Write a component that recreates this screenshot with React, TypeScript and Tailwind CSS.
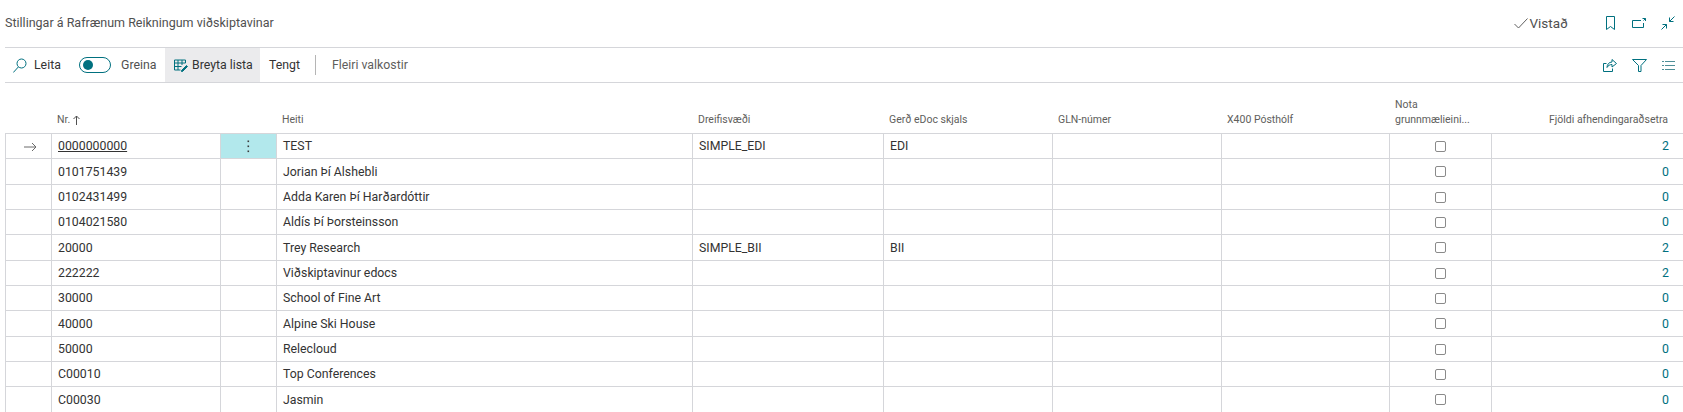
const font = "font-['Roboto','Open_Sans',sans-serif]";

const rows = [
  { nr: '0101751439', name: 'Jorian Þí Alshebli', count: '0' },
  { nr: '0102431499', name: 'Adda Karen Þí Harðardóttir', count: '0' },
  { nr: '0104021580', name: 'Aldís Þí Þorsteinsson', count: '0' },
  { nr: '20000', name: 'Trey Research', area: 'SIMPLE_BII', doc: 'BII', count: '2' },
  { nr: '222222', name: 'Viðskiptavinur edocs', count: '2' },
  { nr: '30000', name: 'School of Fine Art', count: '0' },
  { nr: '40000', name: 'Alpine Ski House', count: '0' },
  { nr: '50000', name: 'Relecloud', count: '0' },
  { nr: 'C00010', name: 'Top Conferences', count: '0' },
  { nr: 'C00030', name: 'Jasmin', count: '0' },
];

const gridCols = 'grid grid-cols-[47px_169px_56px_416px_191px_169px_169px_168px_102px_191px]';
const cell = 'border-r border-[#d5d6da] px-[6px] pt-[1px] flex items-center truncate';
const head = 'px-[5px]';

function CheckBox() {
  return <span className="block w-[11px] h-[11px] rounded-[2px] border border-[#8a8a8a] bg-white" />;
}

function Row({ nr, name, area, doc, count, active }: { nr: string; name: string; area?: string; doc?: string; count: string; active?: boolean }) {
  return (
    <div className={`${gridCols} h-[25.33px] border-b border-[#d5d6da] text-[12.3px] text-[#333333]`}>
      <div className={`${cell} justify-center border-l`}>
        {active && (
          <svg width="13" height="10" viewBox="0 0 13 10" fill="none" stroke="#6b6b6b" className="ml-[3px]">
            <path d="M0 5h12M8 1l4 4-4 4" />
          </svg>
        )}
      </div>
      <div className={cell}>{active ? <span className="underline">{nr}</span> : nr}</div>
      <div className={`${cell} justify-center ${active ? 'bg-[#b2e8ec]' : ''}`}>
        {active && (
          <svg width="3" height="13" viewBox="0 0 3 13" fill="#3a3a3a">
            <rect x="0.5" y="0.5" width="1.6" height="1.6" />
            <rect x="0.5" y="5.5" width="1.6" height="1.6" />
            <rect x="0.5" y="10.5" width="1.6" height="1.6" />
          </svg>
        )}
      </div>
      <div className={cell}>{name}</div>
      <div className={cell}>{area}</div>
      <div className={cell}>{doc}</div>
      <div className={cell} />
      <div className={cell} />
      <div className={`${cell} justify-center`}><CheckBox /></div>
      <div className="pr-[14px] pt-[1px] flex items-center justify-end text-[#00707f]">{count}</div>
    </div>
  );
}

export default function App() {
  return (
    <div className={`h-[412px] overflow-hidden bg-white ${font}`}>
      <div className="h-[48px] ml-[5px] border-b border-[#d5d6da] flex items-center text-[12.5px] text-[#505050] pb-[1px]">
        <span>Stillingar á Rafrænum Reikningum viðskiptavinar</span>
        <div className="ml-auto flex items-center">
          <svg width="14" height="11" viewBox="0 0 14 11" fill="none" stroke="#606060">
            <path d="M.5 6l4 4L13.500.5" />
          </svg>
          <span className="ml-[1px] mr-[38px] text-[13.5px]">Vistað</span>
          <svg width="9" height="14" viewBox="0 0 9 14" fill="none" stroke="#00707f" className="mr-[17px]">
            <path d="M.5.5h8v13l-4-3-4 3z" />
          </svg>
          <svg width="14" height="10" viewBox="0 0 14 10" fill="none" stroke="#00707f" className="mr-[15px]">
            <path d="M9 2.500H.5v7h11V5M10.500.5h3V3M13.500.5l-2 2" />
          </svg>
          <svg width="14" height="14" viewBox="0 0 14 14" fill="none" stroke="#00707f" className="mr-[8px]">
            <path d="M13.500.5l-5 5M8.500 1.500v4h4M.5 13.500l5-5M1.500 8.500h4v4" />
          </svg>
        </div>
      </div>

      <div className="h-[35px] ml-[5px] border-b border-[#d5d6da] flex items-center text-[12.3px] text-[#333333]">
        <svg width="14" height="15" viewBox="0 0 14 15" fill="none" stroke="#00707f" className="ml-[8px] mr-[7px]">
          <circle cx="8.500" cy="5.500" r="4.500" />
          <path d="M5.300 9l-5 5.500" />
        </svg>
        <span className="w-[26px]">Leita</span>
        <span className="ml-[19px] w-[32px] h-[16px] rounded-full border border-[#00707f] flex items-center pl-[3px]">
          <span className="block w-[10px] h-[10px] rounded-full bg-[#00707f]" />
        </span>
        <span className="ml-[10px] w-[35px] text-[#505050]">Greina</span>
        <div className="ml-[9px] h-full w-[95px] bg-[#ebebed] flex items-center pl-[9px]">
          <svg width="14" height="13" viewBox="0 0 14 13" fill="none" stroke="#00707f" className="mr-[4px]">
            <path d="M.5 1h11v3H.5zM.5 4v7h6M4 1v10M8 1v5M.5 7.500h7" />
            <path d="M7.500 11.500l5-5 1 1-5 5h-1z" fill="#00707f" />
          </svg>
          <span>Breyta lista</span>
        </div>
        <span className="ml-[9px] w-[30px]">Tengt</span>
        <span className="ml-[16px] w-px h-[20px] bg-[#b5b5b5]" />
        <span className="ml-[16px] text-[#605e5c]">Fleiri valkostir</span>
        <div className="ml-auto flex items-center">
          <svg width="14" height="13" viewBox="0 0 14 13" fill="none" stroke="#00707f" className="mr-[15px]">
            <path d="M3.500 4.500H.5v8h9V9.500M13.500 4.500L9 .5v2.500C6 3 4 5.500 4 8.500c1-2 3-3 5-3V8z" />
          </svg>
          <svg width="15" height="13" viewBox="0 0 15 13" fill="none" stroke="#00707f" className="mr-[15px]">
            <path d="M.5.5h14L9 6.500v6H6.500v-6z" />
          </svg>
          <svg width="13" height="9" viewBox="0 0 13 9" fill="none" stroke="#4f8f98" className="mr-[8px]">
            <path d="M3 .5h10M3 4.500h10M3 8.500h10M0 .5h2M0 4.500h2M0 8.500h2" />
          </svg>
        </div>
      </div>

      <div className="ml-[5px]">
        <div className={`${gridCols} h-[51px] items-end border-b border-[#d5d6da] text-[10.5px] leading-[15px] text-[#605e5c] pb-[6px]`}>
          <div />
          <div className={`${head} flex items-center gap-[3px]`}>Nr.
            <svg width="7" height="10" viewBox="0 0 7 10" fill="none" stroke="#505050"><path d="M3.500 10V1M.5 4l3-3 3 3" /></svg>
          </div>
          <div />
          <div className={head}>Heiti</div>
          <div className={head}>Dreifisvæði</div>
          <div className={head}>Gerð eDoc skjals</div>
          <div className={head}>GLN-númer</div>
          <div className={head}>X400 Pósthólf</div>
          <div className={head}>Nota<br />grunnmælieini...</div>
          <div className="pr-[15px] text-right">Fjöldi afhendingaraðsetra</div>
        </div>
        <Row nr="0000000000" name="TEST" area="SIMPLE_EDI" doc="EDI" count="2" active />
        {rows.map((r) => (
          <Row key={r.nr} {...r} />
        ))}
      </div>
    </div>
  );
}
